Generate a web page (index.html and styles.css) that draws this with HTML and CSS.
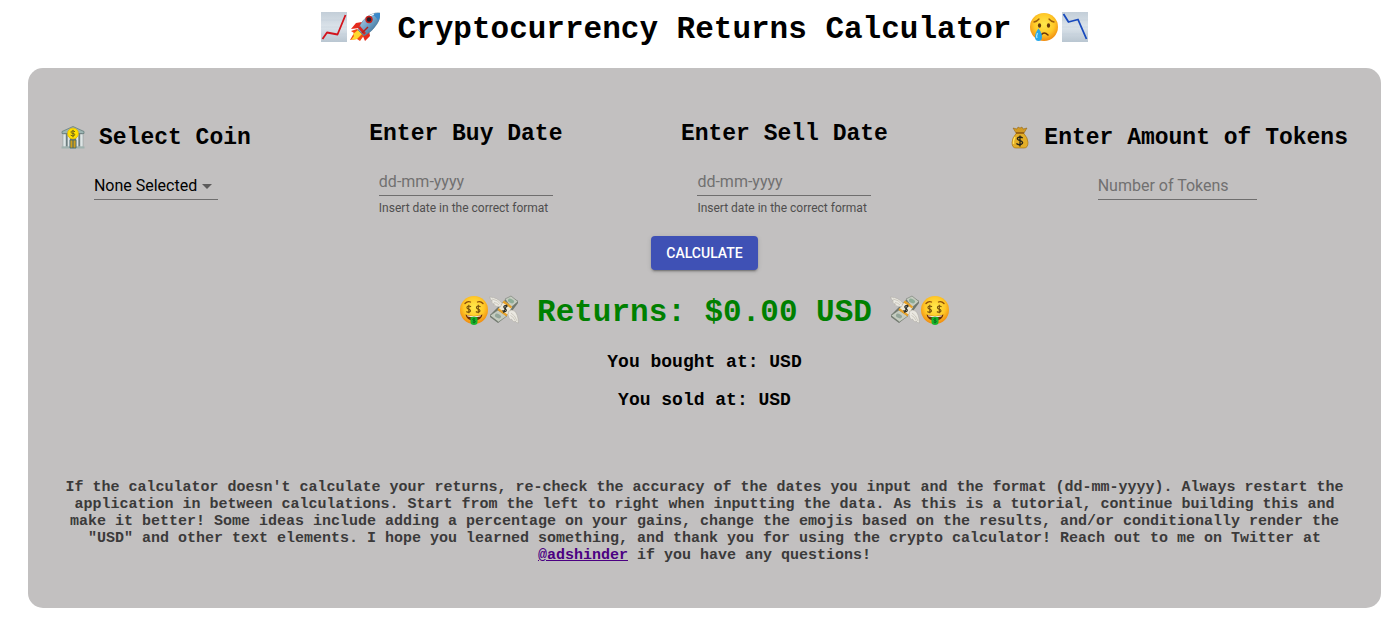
FILE: index.html
```html
<!DOCTYPE html>
<html lang="en">
<head>
<meta charset="UTF-8">
<meta name="viewport" content="width=device-width, initial-scale=1">
<title>Cryptocurrency Returns Calculator</title>
<link rel="stylesheet" href="styles.css">
</head>
<body>
<!-- emoji used more than once -->
<svg class="defs" aria-hidden="true">
  <defs>
    <radialGradient id="face" cx="50%" cy="40%" r="60%">
      <stop offset="0" stop-color="#ffe94d"/><stop offset=".6" stop-color="#ffc928"/><stop offset="1" stop-color="#f08a10"/>
    </radialGradient>
    <linearGradient id="paper" x1="0" y1="0" x2="0" y2="1">
      <stop offset="0" stop-color="#c3ced8"/><stop offset=".5" stop-color="#dbe3ea"/><stop offset="1" stop-color="#b9c6d1"/>
    </linearGradient>
    <linearGradient id="rocket" x1="0" y1="0" x2="1" y2="1">
      <stop offset="0" stop-color="#cfe4f2"/><stop offset=".5" stop-color="#6d9fc4"/><stop offset="1" stop-color="#24547c"/>
    </linearGradient>
    <symbol id="money-face" viewBox="0 0 30 30">
      <circle cx="15" cy="15" r="14" fill="url(#face)"/>
      <path d="M6 8.500q2.500-2.700 5.500-1.500M18.500 7q3-1.200 5.500 1.500" fill="none" stroke="#8a4b08" stroke-width="1.300" stroke-linecap="round"/>
      <g fill="none" stroke="#77500c" stroke-width="1.100">
        <path d="M12 11.800q-1.700-1.300-3.200-.5c-1.500.9-1 2.300.8 2.800 2 .5 2.500 2 1 2.900q-1.700.8-3.200-.5M9.800 9.800v8.500"/>
        <path d="M21.500 11.800q-1.700-1.300-3.200-.5c-1.500.9-1 2.300.8 2.800 2 .5 2.500 2 1 2.900q-1.700.8-3.200-.5M19.300 9.800v8.500"/>
      </g>
      <path d="M6.500 19.500q8.500 3 17 0-1 6-8.500 6t-8.500-6z" fill="#6e2d06"/>
      <path d="M8 20.300q7 1.800 14 0l-.6 1.300q-6.400 1.200-12.800 0z" fill="#fff3dc"/>
      <path d="M11.500 22.500q3.500-1.500 7 0v4.500q0 3-3.500 3t-3.500-3z" fill="#18b52d"/>
      <path d="M16.300 24q-2.600-.9-2.600.5c0 1.200 2.700.8 2.700 2 0 1.300-2 1-2.800.5M15 23.300v5" fill="none" stroke="#08641a" stroke-width=".8"/>
    </symbol>
    <symbol id="money-wings" viewBox="0 0 30 30">
      <path d="M16 5 22 2l7 4v2l-6 8-14 12L1 22v-2z" fill="#6f776d"/>
      <path d="m16 4 6-3 7 5.500-7 6zM9 15l9 6-8.500 6L1 20.500z" fill="#c5ccc0" stroke="#737b70" stroke-width=".6"/>
      <ellipse cx="22" cy="6" rx="3.200" ry="2" transform="rotate(25 22 6)" fill="#8cac96"/>
      <ellipse cx="9" cy="21" rx="3.200" ry="2" transform="rotate(25 9 21)" fill="#94a69a"/>
      <path d="m15 6 8 6-5 8.500-9-6z" fill="#eee8d6"/>
      <path d="m15 5.500 8 6-1 2-8.500-6zM9.500 13l9 6.500-1 2-9-6.500z" fill="#e6a128"/>
      <path d="M18.500 11.500q-3-1.700-3.700.2c-.5 1.800 3 2.200 2.500 4-.5 1.700-3 .8-3.800-.3M18 9.800l-3.500 8" fill="none" stroke="#292d28" stroke-width="1.200"/>
      <path d="M13 8.500Q9 2.500 .5 2q.5 2.500 3 4l-1.500.2q1 2.300 3.500 3l-1 .5q2 2 7 2zM19.500 16.500q3-2.500 6-.5 3.500 3 4 12-2 0-3.500-2l-.5 1q-2-.7-3-3l-1 .7q-2-2-2.500-5z" fill="#eae8e1" stroke="#aaa79e" stroke-width=".5"/>
      <path d="M3 4q6 1 8.500 5M5 7.500q3 .3 5 2.500M22 18q4 2 6 8M21.500 20.500q3 1 4.500 5" stroke="#b8b4a8" stroke-width=".6" fill="none"/>
    </symbol>
  </defs>
</svg>

<h1 class="title">
  <span class="emojis">
    <svg class="emoji" viewBox="0 0 30 30" role="img" aria-label="chart increasing">
      <path d="M1 0h26v30H1z" fill="url(#paper)"/>
      <path d="M1 8h26M1 15h26M1 22h26" stroke="#c3cfd9" stroke-width=".5"/>
      <path d="m2.500 27 4.500-6.500 10.500 2L25.500 3" fill="none" stroke="#d3141d" stroke-width="1.800" stroke-linejoin="round"/>
    </svg><svg class="emoji" viewBox="0 0 30 30" role="img" aria-label="rocket">
      <path d="m12 10-6 1-5 6 8-1zM19 18l1 6-5 5-3-7z" fill="#e52a1d"/>
      <path d="m7 17-6 2 3 2-4 7 7-1 3 2 5-7z" fill="#f34a17"/>
      <path d="m8 18-5 4 1 2-3 4 6-1 5-5z" fill="#ffd92e"/>
      <path d="M8 18Q12 7 20 3q6-3 10-2 1 5-3 11-5 8-13 12z" fill="url(#rocket)" stroke="#4d748f" stroke-width=".5"/>
      <path d="M22 2.500q4.500-2 8-1.500 .5 4-2 8-1-4-6-6.500z" fill="#3988ca"/>
      <path d="M17 6q4-3 7-4" fill="none" stroke="#fff" stroke-width="1.200"/>
      <circle cx="19" cy="7.500" r="3.700" fill="#c71f1b"/><circle cx="19" cy="7.500" r="2.200" fill="#24202b"/>
      <path d="m8 16 6 7 2-2-6-7z" fill="#d62720"/><path d="m18 15-6 6" stroke="#b01f1c" stroke-width="1.500"/>
    </svg>
  </span>
  Cryptocurrency Returns Calculator
  <span class="emojis">
    <svg class="emoji" viewBox="0 0 30 30" role="img" aria-label="crying face">
      <circle cx="15" cy="15" r="14" fill="url(#face)"/>
      <path d="M5 10q3-.5 5-3M20 7q2 2.500 5 3" fill="none" stroke="#9a5c0a" stroke-width="1.300" stroke-linecap="round"/>
      <ellipse cx="10.500" cy="13.500" rx="1.600" ry="2.300" fill="#653808"/><ellipse cx="19.500" cy="13.500" rx="1.600" ry="2.300" fill="#653808"/>
      <path d="M12 23q3-4 7 0" fill="none" stroke="#6c3505" stroke-width="1.500" stroke-linecap="round"/>
      <path d="M9.500 16.500Q6 21 6 25q0 4 3.500 4t3.500-4q0-4-3.500-8.500z" fill="#27a8eb"/>
      <path d="M8.500 21q-1.500 3-.5 5" fill="none" stroke="#a8e7ff" stroke-width="1.300"/>
    </svg><svg class="emoji" viewBox="0 0 30 30" role="img" aria-label="chart decreasing">
      <path d="M3 0h26v30H3z" fill="url(#paper)"/>
      <path d="M3 8h26M3 15h26M3 22h26" stroke="#c3cfd9" stroke-width=".5"/>
      <path d="m4.500 2 5 8 9.500-2.500L27.500 27" fill="none" stroke="#1749bd" stroke-width="1.800" stroke-linejoin="round"/>
    </svg>
  </span>
</h1>

<main class="calculator">
  <form>
    <div class="fields">
      <div class="field">
        <h2 class="with-emoji">
          <svg class="emoji-small" viewBox="0 0 24 24" role="img" aria-label="bank">
            <path d="M1 5.500 12 .5l11 5v2H1z" fill="#9db5b3" stroke="#5d7774" stroke-width=".7"/>
            <path d="M3 7.500h18v13H3z" fill="#66777a"/>
            <path d="M2 8h3v13H2zM6.500 8h2.500v13H6.500zM15 8h2.500v13H15zM19 8h3v13h-3z" fill="#dfe6e6" stroke="#829391" stroke-width=".5"/>
            <path d="M.5 20.500h23v2H.5z" fill="#9fb2ae"/>
            <path d="M9 14h6v8H9z" fill="#cf9f1c" stroke="#3c6470" stroke-width=".8"/><path d="M12 14v8" stroke="#3c6470"/>
            <circle cx="12" cy="7.500" r="5.500" fill="#ffe000" stroke="#dcaa00" stroke-width=".6"/>
            <path d="M14 5.700q-2-1.300-3.500-.5c-1.300 1-.5 1.900 1.400 2.200 2.100.4 2.600 1.500 1.100 2.300q-1.500.7-3.300-.5M12 3.800v7.500" fill="none" stroke="#6f6415"/>
          </svg>
          <label for="coin">Select Coin</label>
        </h2>
        <div class="select-box">
          <select id="coin" class="control">
            <option>None Selected</option>
          </select>
          <svg class="arrow" viewBox="0 0 10 5" aria-hidden="true"><path d="M0 0h10L5 5z"/></svg>
        </div>
      </div>

      <div class="field">
        <h2><label for="buy">Enter Buy Date</label></h2>
        <input id="buy" class="control date" type="text" placeholder="dd-mm-yyyy" aria-describedby="buy-help">
        <p class="helper" id="buy-help">Insert date in the correct format</p>
      </div>

      <div class="field">
        <h2><label for="sell">Enter Sell Date</label></h2>
        <input id="sell" class="control date" type="text" placeholder="dd-mm-yyyy" aria-describedby="sell-help">
        <p class="helper" id="sell-help">Insert date in the correct format</p>
      </div>

      <div class="field">
        <h2 class="with-emoji">
          <svg class="emoji-small" viewBox="-2 1 24 24" role="img" aria-label="money bag">
            <path d="m8 8-3-5 4 1 1-2 2 1 2-1 1 2 4-1-3 5z" fill="#d29a22" stroke="#8b5c0d" stroke-width=".5"/>
            <path d="M8.500 8h7q4.500 5 4.500 9.500 0 5.500-4 5.500H8q-4 0-4-5.500 0-4.500 4.500-9.500z" fill="#e3ae28" stroke="#9d6a0c" stroke-width=".6"/>
            <path d="M7 12q-2 3-1.500 7" fill="none" stroke="#ffe05a" stroke-width="1.500"/>
            <path d="M8 8h8" stroke="#8c5611" stroke-width="1.300"/>
            <path d="M14.700 13q-2.300-1.700-4.300-.6c-2 1.200-.7 2.700 1.600 3.200 2.600.6 3.500 2.300 1.400 3.600-2 .9-4 .2-4.900-.9M12 10.500v11" fill="none" stroke="#252318" stroke-width="1.300"/>
          </svg>
          <label for="tokens">Enter Amount of Tokens</label>
        </h2>
        <input id="tokens" class="control tokens" type="text" placeholder="Number of Tokens">
      </div>
    </div>
    <button class="calculate" type="button">CALCULATE</button>
  </form>

  <h2 class="returns">
    <span class="emojis"><svg class="emoji" role="img" aria-label="money-mouth face"><use href="#money-face"/></svg><svg class="emoji" role="img" aria-label="money with wings"><use href="#money-wings"/></svg></span>
    Returns: $0.00 USD
    <span class="emojis"><svg class="emoji" role="img" aria-label="money with wings"><use href="#money-wings"/></svg><svg class="emoji" role="img" aria-label="money-mouth face"><use href="#money-face"/></svg></span>
  </h2>
  <h3>You bought at: USD</h3>
  <h3>You sold at: USD</h3>

  <p class="note">If the calculator doesn't calculate your returns, re-check the accuracy of the dates you input and the format (dd-mm-yyyy). Always restart the application in between calculations. Start from the left to right when inputting the data. As this is a tutorial, continue building this and make it better! Some ideas include adding a percentage on your gains, change the emojis based on the results, and/or conditionally render the "USD" and other text elements. I hope you learned something, and thank you for using the crypto calculator! Reach out to me on Twitter at <a href="#">@adshinder</a> if you have any questions!</p>
</main>
</body>
</html>
```

FILE: styles.css
```css
*{box-sizing:border-box;}
body{
  margin:0;
  padding:8px 19px 23px 28px;
  background:#fff;
  color:#000;
  font-family:"Courier New","Liberation Mono",monospace;
  text-align:center;
}
h1,h2,h3,p{margin:0;}
.defs{position:absolute;width:0;height:0;}

/* headings with emoji */
.title,.returns{
  display:flex;
  justify-content:center;
  align-items:center;
  gap:18px;
  font-size:31px;
  line-height:44px;
}
.title{margin-bottom:16px;}
.emojis{display:flex;padding-bottom:6px;}
.emoji{width:30px;height:30px;}
.emoji-small{width:24px;height:24px;}

/* grey panel */
.calculator{
  padding:53px 28px 44px;
  background:#c2c0c0;
  border-radius:15px;
}
.fields{
  display:flex;
  justify-content:space-between;
  padding:0 5px;
}
.field{
  display:flex;
  flex-direction:column;
  align-items:center;
}
.field h2{
  font-size:23px;
  line-height:26px;
  margin-bottom:21px;
}
.field .with-emoji{
  display:flex;
  align-items:center;
  gap:14px;
  padding-top:4px;
}

/* inputs */
.control{
  height:28px;
  padding:0;
  border:0;
  border-bottom:1px solid #6f6e6e;
  border-radius:0;
  background:transparent;
  color:#000;
  font-family:Roboto,sans-serif;
  font-size:16px;
  outline:0;
}
.control::placeholder{color:#717070;opacity:1;}
.select-box{position:relative;}
.select-box .control{width:124px;appearance:none;}
.arrow{
  position:absolute;
  top:12px;
  right:6px;
  width:10px;
  height:5px;
  fill:#5c5b5b;
  pointer-events:none;
}
.date{width:174px;}
.tokens{width:159px;}
.helper{
  width:174px;
  margin-top:4px;
  color:#4f4e4e;
  font-family:Roboto,sans-serif;
  font-size:12px;
  line-height:16px;
  text-align:left;
}
.calculate{
  height:34px;
  margin-top:20px;
  padding:0 15px;
  border:0;
  border-radius:4px;
  background:#3f51b5;
  color:#fff;
  font-family:Roboto,sans-serif;
  font-size:14px;
  font-weight:500;
  box-shadow:0 3px 1px -2px rgba(0,0,0,.2),0 2px 2px rgba(0,0,0,.14),0 1px 5px rgba(0,0,0,.12);
}

/* results */
.returns{margin:21px 0 17px;color:green;}
h3{
  font-size:18px;
  line-height:20px;
  margin-bottom:18px;
}
.note{
  margin-top:69px;
  color:#3b3a3a;
  font-size:15px;
  font-weight:bold;
  line-height:17px;
}
.note a{color:#4b0082;}
```
